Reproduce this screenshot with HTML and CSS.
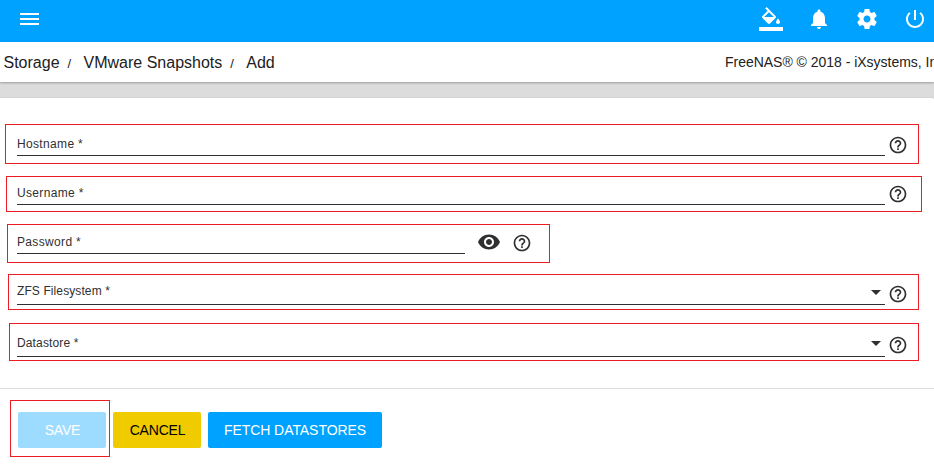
FILE: index.html
```html
<!DOCTYPE html>
<html lang="en">
<head>
<meta charset="utf-8">
<title>VMware Snapshots - Add</title>
<link rel="stylesheet" href="styles.css">
</head>
<body>
<svg class="defs" aria-hidden="true">
  <symbol id="help" viewBox="0 0 24 24"><path d="M11 18h2v-2h-2v2zm1-16C6.48 2 2 6.48 2 12s4.480 10 10 10 10-4.480 10-10S17.520 2 12 2zm0 18c-4.410 0-8-3.590-8-8s3.590-8 8-8 8 3.590 8 8-3.590 8-8 8zm0-14c-2.210 0-4 1.790-4 4h2c0-1.100.9-2 2-2s2 .9 2 2c0 2-3 1.750-3 5h2c0-2.250 3-2.500 3-5 0-2.210-1.790-4-4-4z"/></symbol>
</svg>
<header class="topbar">
  <svg class="menu" viewBox="0 0 19 12"><path d="M0 0h19v2H0zM0 5h19v2H0zM0 10h19v2H0z"/></svg>
  <nav class="actions">
    <svg class="icon" viewBox="0 0 24 24"><path d="M16.560 8.940L7.620 0 6.210 1.410l2.380 2.380-5.150 5.150c-.59.59-.59 1.540 0 2.120l5.500 5.500c.29.29.68.44 1.060.44s.77-.15 1.060-.44l5.500-5.500c.59-.58.59-1.530 0-2.120zM5.210 10L10 5.210 14.790 10H5.210zM19 11.500s-2 2.170-2 3.500c0 1.100.9 2 2 2s2-.9 2-2c0-1.330-2-3.500-2-3.500zM0 20h24v4H0z"/></svg>
    <svg class="icon" viewBox="0 0 24 24"><path d="M12 22c1.100 0 2-.9 2-2h-4c0 1.100.89 2 2 2zm6-6v-5c0-3.070-1.640-5.640-4.500-6.320V4c0-.83-.67-1.500-1.500-1.500s-1.500.67-1.500 1.500v.68C7.630 5.360 6 7.920 6 11v5l-2 2v1h16v-1l-2-2z"/></svg>
    <svg class="icon" viewBox="0 0 24 24"><path d="M19.430 12.980c.04-.32.07-.64.07-.98s-.03-.66-.07-.98l2.110-1.650c.19-.15.24-.42.12-.64l-2-3.460c-.12-.22-.39-.3-.61-.22l-2.490 1c-.52-.4-1.080-.73-1.690-.98l-.38-2.650C14.460 2.180 14.250 2 14 2h-4c-.25 0-.46.18-.49.42l-.38 2.650c-.61.25-1.170.59-1.690.98l-2.490-1c-.23-.09-.49 0-.61.22l-2 3.460c-.13.22-.07.49.12.64l2.110 1.650c-.04.32-.07.65-.07.98s.03.66.07.98l-2.110 1.650c-.19.15-.24.42-.12.64l2 3.460c.12.22.39.3.61.22l2.490-1c.52.4 1.080.73 1.690.98l.38 2.650c.03.24.24.42.49.42h4c.25 0 .46-.18.49-.42l.38-2.650c.61-.25 1.170-.59 1.690-.98l2.490 1c.23.09.49 0 .61-.22l2-3.460c.12-.22.07-.49-.12-.64l-2.110-1.650zM12 15.500c-1.930 0-3.500-1.570-3.500-3.500s1.570-3.500 3.500-3.500 3.500 1.570 3.500 3.500-1.570 3.500-3.500 3.500z"/></svg>
    <svg class="icon" viewBox="0 0 24 24"><path d="M13 3h-2v10h2V3zm4.830 2.170l-1.420 1.420C17.990 7.860 19 9.810 19 12c0 3.870-3.130 7-7 7s-7-3.130-7-7c0-2.190 1.010-4.140 2.580-5.420L6.170 5.170C4.230 6.820 3 9.260 3 12c0 4.970 4.030 9 9 9s9-4.030 9-9c0-2.740-1.230-5.180-3.170-6.830z"/></svg>
  </nav>
</header>
<div class="breadcrumb">
  <div class="crumbs"><span>Storage</span><span class="sep">/</span><span>VMware Snapshots</span><span class="sep">/</span><span>Add</span></div>
  <div class="copyright">FreeNAS® © 2018 - iXsystems, Inc.</div>
</div>
<main class="card">
  <form class="form">
    <div class="row hostname">
      <label class="field">Hostname *</label>
      <svg class="help"><use href="#help"/></svg>
    </div>
    <div class="row username">
      <label class="field">Username *</label>
      <svg class="help"><use href="#help"/></svg>
    </div>
    <div class="row password">
      <label class="field">Password *</label>
      <svg class="eye" viewBox="0 0 24 24"><path d="M12 4.500C7 4.500 2.730 7.610 1 12c1.730 4.390 6 7.500 11 7.500s9.270-3.110 11-7.500c-1.730-4.390-6-7.500-11-7.500zM12 17c-2.760 0-5-2.240-5-5s2.240-5 5-5 5 2.240 5 5-2.240 5-5 5zm0-8c-1.660 0-3 1.340-3 3s1.340 3 3 3 3-1.340 3-3-1.340-3-3-3z"/></svg>
      <svg class="help"><use href="#help"/></svg>
    </div>
    <div class="row filesystem">
      <label class="field">ZFS Filesystem *<i class="caret"></i></label>
      <svg class="help"><use href="#help"/></svg>
    </div>
    <div class="row datastore">
      <label class="field">Datastore *<i class="caret"></i></label>
      <svg class="help"><use href="#help"/></svg>
    </div>
  </form>
  <footer class="buttons">
    <div class="highlight"><button class="btn save" disabled>SAVE</button></div>
    <button class="btn cancel">CANCEL</button>
    <button class="btn fetch">FETCH DATASTORES</button>
  </footer>
</main>
</body>
</html>
```
FILE: styles.css
```css
* { box-sizing: border-box; }
body {
  margin: 0;
  height: 467px;
  overflow: hidden;
  background: #dcdcdc;
  color: #212121;
  font-family: "Liberation Sans", Arial, sans-serif;
}
svg { display: block; flex: none; fill: currentColor; }
.defs { width: 0; height: 0; position: absolute; }

.topbar {
  display: flex;
  justify-content: space-between;
  height: 42px;
  padding: 7px 7px 0 20px;
  background: #00a2ff;
  color: #fff;
}
.menu { width: 19px; height: 12px; margin-top: 6px; }
.actions { display: flex; gap: 24px; }
.icon { width: 24px; height: 24px; }

.breadcrumb {
  display: flex;
  justify-content: space-between;
  height: 40px;
  padding-left: 3.500px;
  background: #fff;
  box-shadow: 0 1px 2px rgba(0, 0, 0, .3);
  line-height: 42px;
  white-space: nowrap;
}
.crumbs { display: flex; font-size: 16px; }
.sep { width: 24px; padding-left: 8px; font-size: 13px; line-height: 43px; }
.copyright { width: 209px; overflow: hidden; font-size: 14px; line-height: 41px; letter-spacing: -.02px; }

.card {
  height: 369px;
  margin-top: 16px;
  background: #fff;
  border-top-right-radius: 2px;
  box-shadow: 0 0 2px rgba(0, 0, 0, .12);
}
.form { height: 291px; padding-top: 26px; border-bottom: 1px solid #dedede; }
.row {
  display: flex;
  align-items: flex-start;
  border: 1px solid #ed1c24;
  color: #303030;
}
.field {
  display: flex;
  justify-content: space-between;
  width: 868px;
  height: 20px;
  border-bottom: 1px solid #303030;
  font-size: 12px;
  line-height: 16px;
  letter-spacing: .34px;
}
.help { width: 20px; height: 20px; margin-left: 2.500px; }
.caret {
  width: 10px;
  height: 5px;
  margin: 6px 4px 0 0;
  background: currentColor;
  clip-path: polygon(0 0, 100% 0, 50% 100%);
}
.hostname { width: 914px; height: 40px; margin-left: 5px; padding: 11px 0 0 11px; }
.username { width: 916px; height: 36px; margin: 12px 0 0 6px; padding: 8px 0 0 10px; }
.password { width: 543px; height: 39px; margin: 12px 0 0 7px; padding: 9px 0 0 9px; }
.password .field { width: 448px; }
.eye { width: 24px; height: 24px; margin: -4px 0 0 11.500px; }
.password .help { margin: -1px 0 0 11px; }
.filesystem { width: 911px; height: 36px; margin: 11px 0 0 8px; padding: 8px 0 0 8px; }
.filesystem .field { height: 22px; letter-spacing: .1px; }
.filesystem .help { margin-top: 1px; }
.filesystem .caret { margin-top: 7px; }
.datastore { width: 910px; height: 38px; margin: 13px 0 0 9px; padding: 11px 0 0 7px; }
.datastore .field { height: 22px; letter-spacing: .14px; }

.hostname .help, .username .help { margin-top: -1px; }

.buttons { display: flex; padding: 11px 0 0 10px; }
.highlight { width: 100px; height: 57px; padding: 11px 0 0 7px; border: 1px solid #ed1c24; }
.btn {
  height: 36px;
  padding: 0;
  border: 0;
  border-radius: 2px;
  font: 14px/36px "Liberation Sans", Arial, sans-serif;
}
.save { width: 88px; padding-left: 1px; background: #9edcff; color: #fff; letter-spacing: -.2px; }
.cancel { width: 88px; padding-left: 1px; margin: 12px 0 0 3px; background: #f0cb00; color: #000; letter-spacing: -.2px; }
.fetch { width: 174px; margin: 12px 0 0 7px; background: #00a2ff; color: #fff; letter-spacing: -.06px; }
```
